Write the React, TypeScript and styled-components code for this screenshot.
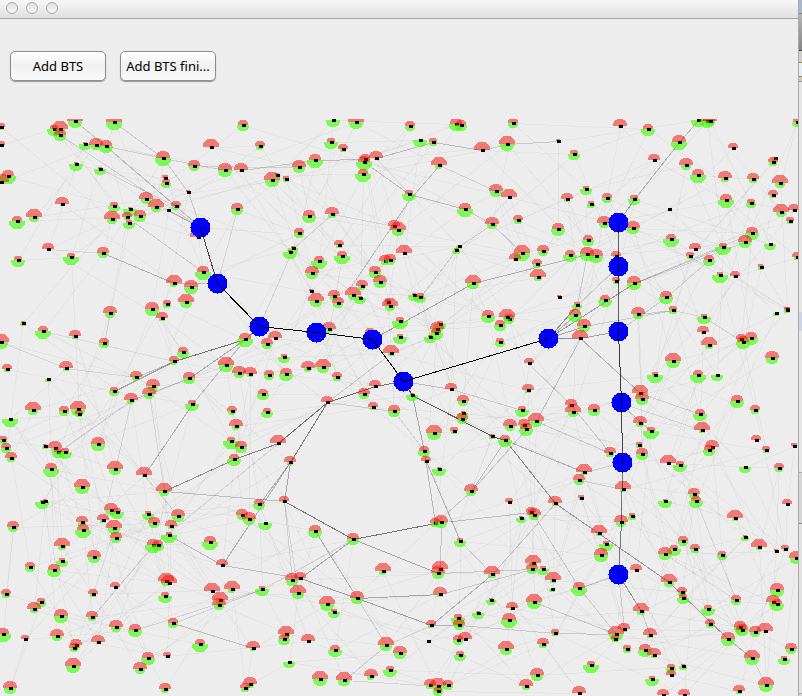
import React from "react";
import styled, { createGlobalStyle } from "styled-components";

const GlobalStyle = createGlobalStyle`
  body { margin: 0; background: #ededed; overflow: hidden; }
`;

const Desktop = styled.div`
  display: flex;
  min-height: 100vh;
  font-family: "Noto Sans", "Liberation Sans", sans-serif;
`;
const Frame = styled.main`
  flex: 1;
  min-width: 0;
  display: flex;
  flex-direction: column;
  background: #ededed;
`;
const TitleBar = styled.header`
  display: flex;
  align-items: center;
  gap: 8px;
  height: 19px;
  padding: 0 6px 2px;
  box-sizing: border-box;
  background: linear-gradient(#f7f7f7, #e0e0e0);
  border-bottom: 1px solid #a3a3a3;
`;
const WindowButton = styled.button`
  width: 12px;
  height: 12px;
  padding: 0;
  border: 1px solid #a9a9a9;
  border-radius: 50%;
  background: linear-gradient(#dedede, #f8f8f8);
`;
const Toolbar = styled.div`
  display: flex;
  gap: 14px;
  padding: 32px 10px 38px;
`;
const ToolButton = styled.button`
  width: 96px;
  height: 30px;
  padding: 0 3px;
  box-sizing: border-box;
  overflow: hidden;
  white-space: nowrap;
  border: 1px solid #8c8c8c;
  border-radius: 5px;
  background: linear-gradient(#ffffff, #f0f0f0 50%, #fafafa);
  box-shadow: 0 1px 1px #9a9a9a;
  color: #000;
  font: 13px/20px "Noto Sans", "Liberation Sans", sans-serif;
`;
const NetworkMap = styled.svg`
  display: block;
  width: 100%;
  height: auto;
`;
const Backdrop = styled.aside`
  flex: none;
  width: 4px;
  box-sizing: border-box;
  border-left: 1px solid #a8a8a8;
  display: flex;
  flex-direction: column;
  background: #d9d9d9;
`;
const Band = styled.div<{ $height: number; $fill: string; $line?: string }>`
  height: ${(p) => p.$height}px;
  box-sizing: border-box;
  background: ${(p) => p.$fill};
  border-bottom: 1px solid ${(p) => p.$line ?? "transparent"};
`;

type Station = [x: number, y: number, up: number, down: number];
type Point = [x: number, y: number];
type Link = [x1: number, y1: number, x2: number, y2: number, weight: number];

const stations: Station[] = [
  [1,127,4,3],[54,129,4,7],[60,129,8,4],[60,135,6,6],[75,121,8,7],[114,122,8,8],[85,144,2,6],[96,145,7,5],[106,146,6,7],[1,145,4,1],
  [243,125,5,6],[211,147,8,2],[260,146,5,4],[163,158,7,8],[76,164,2,7],[100,169,2,6],[194,166,6,5],[225,170,7,7],[241,170,7,2],[8,176,6,8],
  [1,182,8,2],[165,178,3,1],[166,183,4,5],[188,192,2,1],[146,199,7,5],[156,207,8,5],[176,206,5,4],[168,210,1,1],[237,209,6,6],[62,204,7,2],
  [114,206,4,6],[130,209,2,7],[127,217,5,3],[140,216,6,6],[112,219,8,5],[129,223,3,6],[17,221,5,8],[34,217,8,5],[198,237,8,2],[18,260,4,7],
  [48,249,6,1],[71,257,4,8],[103,253,6,5],[203,272,6,8],[174,283,8,4],[191,287,7,7],[186,302,8,6],[167,304,4,4],[152,309,7,7],[110,313,7,5],
  [333,120,1,7],[356,122,8,7],[410,126,5,5],[456,124,6,7],[461,125,5,6],[513,123,5,5],[331,142,4,7],[343,149,5,3],[420,140,1,7],[433,142,4,4],
  [482,150,8,1],[507,144,8,7],[315,160,6,8],[299,167,7,6],[365,159,5,4],[364,162,6,8],[376,158,7,2],[363,174,5,8],[439,165,8,4],[272,180,8,7],
  [277,175,2,3],[286,179,3,3],[409,194,4,7],[496,191,7,6],[509,197,8,1],[465,209,6,8],[518,220,5,4],[492,224,7,5],[309,216,6,7],[332,214,7,4],
  [299,233,5,5],[394,226,6,3],[398,230,8,6],[339,245,5,3],[293,248,2,5],[290,252,2,7],[342,256,5,8],[319,261,5,8],[404,253,8,1],[459,246,1,3],
  [456,250,2,4],[522,253,8,8],[515,259,6,2],[385,261,6,4],[390,260,6,5],[375,272,6,6],[312,273,7,6],[380,282,7,6],[473,283,8,6],[362,286,6,4],
  [311,291,2,1],[334,296,6,4],[316,301,8,6],[353,295,8,5],[360,298,2,6],[338,303,6,5],[414,295,2,6],[420,297,4,6],[388,302,3,3],[390,306,8,5],
  [620,126,7,2],[648,129,5,7],[698,120,1,7],[707,121,8,7],[710,121,7,5],[797,122,4,5],[558,141,2,1],[679,142,7,8],[574,154,4,6],[733,148,5,1],
  [654,160,6,1],[775,158,1,3],[773,162,5,4],[686,165,7,5],[698,175,6,8],[725,178,7,4],[753,179,6,4],[780,183,8,5],[586,189,3,6],[567,199,6,3],
  [607,198,5,5],[634,199,4,6],[591,204,3,4],[773,195,5,3],[726,200,6,8],[751,203,4,5],[669,209,0,0],[781,212,8,5],[794,210,6,2],[790,221,4,3],
  [604,223,7,5],[633,228,7,6],[558,229,6,7],[752,233,6,7],[745,242,7,6],[671,239,5,8],[770,244,1,6],[695,249,6,1],[723,247,4,8],[690,256,4,3],
  [588,240,5,6],[543,251,6,5],[587,254,7,7],[570,255,5,7],[596,256,7,7],[616,256,5,3],[709,260,5,6],[797,257,5,3],[537,264,5,4],[761,267,3,3],
  [538,277,8,4],[720,275,3,8],[735,276,5,2],[616,281,4,3],[634,283,7,7],[559,297,2,1],[666,297,6,7],[605,300,5,7],[577,305,3,5],[787,309,2,1],
  [23,323,2,3],[43,331,5,8],[1,342,8,7],[75,336,6,3],[104,343,5,5],[162,318,6,3],[183,352,5,6],[174,361,5,4],[245,339,6,8],[267,344,6,5],
  [7,369,5,3],[66,368,7,3],[48,379,1,3],[136,377,6,4],[114,391,4,5],[153,386,7,5],[149,394,7,5],[131,400,7,4],[189,378,6,6],[226,365,8,7],
  [239,373,7,5],[250,374,7,3],[269,375,5,5],[192,404,4,7],[263,394,5,6],[33,410,8,5],[64,411,5,5],[78,409,8,7],[79,414,4,3],[10,419,1,8],
  [232,411,5,4],[267,412,4,6],[236,426,7,4],[3,440,4,4],[6,448,5,5],[11,458,6,4],[45,446,2,3],[55,448,7,4],[58,452,4,6],[65,452,4,7],
  [98,444,7,7],[231,441,4,8],[241,447,6,6],[234,459,5,7],[51,469,6,8],[115,469,8,6],[144,475,8,2],[82,487,8,7],[164,491,8,5],[329,329,7,4],
  [275,338,7,1],[400,321,4,8],[400,337,3,7],[391,353,8,3],[370,333,5,5],[440,324,3,6],[437,329,7,5],[436,333,5,7],[430,337,2,6],[488,316,6,7],
  [509,319,5,5],[507,317,8,4],[500,325,5,6],[500,342,4,5],[284,357,3,6],[308,368,7,4],[323,367,8,6],[286,374,6,7],[337,377,5,4],[327,402,6,1],
  [375,386,6,1],[364,394,6,5],[373,407,5,3],[394,411,6,6],[412,395,2,6],[451,389,6,1],[463,401,6,5],[463,413,2,5],[462,419,6,5],[522,410,4,7],
  [529,363,5,1],[528,390,6,3],[278,443,8,1],[290,462,6,3],[434,433,8,7],[454,431,4,3],[510,426,7,5],[524,425,6,4],[526,429,6,7],[492,436,2,3],
  [505,440,5,7],[424,451,5,6],[426,461,5,2],[439,469,2,7],[471,491,7,5],[575,315,6,7],[638,314,7,5],[673,310,4,4],[704,317,3,7],[584,326,7,6],
  [580,338,8,1],[703,332,6,2],[776,313,1,3],[787,310,3,3],[709,345,8,4],[741,339,5,3],[751,338,6,7],[743,342,6,7],[772,358,7,6],[673,361,8,7],
  [655,375,3,8],[698,375,5,8],[717,375,1,6],[640,393,8,4],[642,399,7,6],[571,405,6,3],[573,412,8,5],[594,410,6,6],[536,421,8,6],[737,401,6,7],
  [755,410,5,4],[700,414,5,7],[640,423,7,4],[702,430,8,3],[651,431,4,8],[756,440,5,1],[766,450,4,3],[794,446,3,1],[712,447,7,3],[709,450,5,6],
  [639,445,3,3],[642,454,6,6],[610,453,6,4],[584,472,8,3],[579,480,6,5],[668,463,8,1],[680,465,4,7],[745,467,1,6],[779,468,5,4],[623,489,8,3],
  [694,494,6,5],[581,498,3,2],[42,502,2,7],[45,501,2,1],[13,527,6,5],[82,522,6,4],[83,530,6,8],[62,546,8,4],[103,520,6,3],[111,510,7,5],
  [117,512,4,7],[114,528,8,6],[116,538,6,5],[148,514,3,6],[154,523,6,5],[178,516,7,6],[171,526,6,3],[169,535,3,8],[153,545,6,8],[158,545,5,6],
  [210,542,6,8],[242,515,6,5],[249,519,7,6],[265,523,1,7],[259,504,5,6],[94,557,7,6],[62,561,3,6],[54,570,6,7],[30,567,5,5],[222,565,6,1],
  [115,587,5,1],[6,594,5,4],[41,602,4,5],[34,609,7,4],[93,594,5,3],[166,581,8,5],[169,583,8,2],[165,596,4,7],[212,591,8,1],[232,589,8,4],
  [220,600,8,4],[219,605,7,5],[262,589,3,7],[61,616,7,7],[92,617,6,4],[116,627,7,5],[135,630,6,7],[173,623,5,5],[3,634,6,8],[25,639,4,1],
  [57,636,7,5],[76,645,6,4],[74,648,5,4],[98,642,7,2],[73,666,8,7],[200,644,5,8],[253,648,7,3],[148,658,6,7],[167,656,4,2],[140,669,7,5],
  [10,688,7,6],[165,689,6,4],[250,684,7,4],[245,688,5,4],[284,501,5,2],[315,531,6,7],[353,539,6,6],[435,523,5,4],[441,522,7,6],[460,541,3,6],
  [509,502,4,1],[521,518,2,5],[531,512,5,3],[440,569,8,3],[438,573,7,6],[383,571,8,4],[492,574,8,4],[300,578,6,2],[292,580,7,6],[298,593,8,6],
  [327,604,8,7],[334,612,3,6],[357,598,7,6],[440,594,7,3],[491,600,2,5],[478,613,2,6],[512,608,6,2],[458,618,4,7],[459,625,6,5],[431,625,5,3],
  [509,620,7,8],[286,634,8,4],[284,639,5,6],[308,641,7,1],[335,650,5,7],[386,645,8,6],[400,653,7,6],[428,641,0,0],[458,640,5,5],[465,639,7,2],
  [460,655,4,6],[506,649,8,6],[289,662,1,6],[390,670,4,7],[371,676,7,4],[320,679,8,7],[344,680,8,6],[430,685,6,4],[438,686,8,6],[448,685,5,5],
  [438,691,4,5],[526,686,7,4],[555,503,7,3],[534,515,7,5],[665,501,2,7],[696,501,5,7],[787,504,5,1],[735,518,8,3],[621,522,7,5],[632,516,3,4],
  [599,533,8,3],[606,544,3,7],[601,555,7,7],[683,541,5,5],[674,549,4,7],[665,554,7,6],[695,549,5,4],[745,537,2,4],[759,547,8,3],[776,551,2,2],
  [785,549,4,2],[722,555,4,5],[796,558,7,6],[533,563,8,4],[532,569,6,5],[543,569,3,6],[553,580,8,3],[579,588,6,8],[552,589,1,3],[636,570,6,1],
  [669,582,8,5],[682,592,5,4],[683,598,4,6],[777,590,7,7],[736,600,5,5],[773,602,7,4],[777,604,5,7],[534,602,8,7],[641,611,8,4],[708,609,4,7],
  [710,624,5,4],[740,627,6,6],[742,630,6,6],[755,632,6,5],[765,631,8,2],[728,639,7,7],[624,629,6,3],[616,634,8,7],[615,639,4,3],[650,635,7,3],
  [555,633,4,3],[543,644,6,4],[627,649,4,4],[645,650,6,7],[654,655,7,3],[791,649,6,5],[784,659,3,6],[752,658,8,7],[591,665,4,8],[671,668,4,5],
  [671,675,5,1],[683,666,2,4],[652,679,3,7],[537,675,7,6],[766,685,8,7],[739,691,6,3],[579,693,7,1],[663,695,6,1],[684,695,6,1],
];

const hubs: Point[] = [
  [200,227],[217,283],[259,326],[316,332],[372,339],[403,381],[548,338],
  [618,222],[618,266],[618,331],[621,402],[622,462],[618,574],
];

const trunks: Link[] = [
  [200,227,217,283,0.7],[217,283,259,326,1],[259,326,316,332,1],[316,332,372,339,1],[372,339,403,381,1],[403,381,548,338,1],
  [618,222,618,266,0.6],[618,266,618,331,0.6],[618,331,621,402,0.75],[621,402,622,462,0.7],[622,462,621,522,0.5],[621,522,618,574,0.5],
];

const links: Link[] = [
  [403,381,412,395,0.7],[412,395,492,436,0.6],[492,436,505,440,0.6],[505,440,555,503,0.4],[555,503,669,582,0.35],[669,582,728,639,0.3],
  [728,639,752,658,0.25],[752,658,766,685,0.12],[403,381,375,386,0.5],[375,386,327,402,0.55],[327,402,278,443,0.5],[278,443,234,459,0.45],
  [234,459,164,491,0.4],[327,402,290,462,0.45],[290,462,284,501,0.3],[290,462,259,504,0.25],[284,501,353,539,0.5],[353,539,435,523,0.5],
  [259,326,245,339,0.4],[245,339,174,361,0.5],[174,361,114,391,0.3],[174,361,136,377,0.2],[245,339,189,378,0.25],[189,378,131,400,0.2],
  [245,339,192,404,0.2],[192,404,144,475,0.25],[353,539,438,573,0.3],[353,539,300,578,0.25],[315,531,357,598,0.25],[357,598,440,594,0.3],
  [300,578,357,598,0.3],[357,598,431,625,0.3],[60,135,200,227,0.12],[75,121,106,146,0.15],[106,146,200,227,0.2],[114,122,163,158,0.15],
  [163,158,188,192,0.15],[188,192,200,227,0.15],[100,169,176,206,0.12],[168,210,200,227,0.2],[146,199,200,227,0.12],[103,253,174,283,0.25],
  [174,283,217,283,0.2],[127,217,203,272,0.15],[48,249,103,253,0.1],[106,146,163,158,0.12],[163,158,225,170,0.12],[194,166,299,167,0.1],
  [241,170,315,160,0.15],[315,160,365,159,0.2],[376,158,433,142,0.2],[433,142,482,150,0.2],[482,150,507,144,0.15],[507,144,558,141,0.12],
  [364,162,409,194,0.2],[409,194,465,209,0.2],[465,209,492,224,0.15],[492,224,522,253,0.15],[439,165,409,200,0.2],[409,200,349,289,0.2],
  [439,165,496,191,0.12],[332,214,394,226,0.1],[332,214,293,248,0.12],[473,283,587,254,0.25],[372,339,473,283,0.3],[420,297,459,246,0.15],
  [459,246,492,224,0.15],[618,222,634,199,0.35],[634,199,679,142,0.25],[679,142,698,120,0.2],[548,338,634,283,0.35],[634,283,723,247,0.15],
  [634,283,745,242,0.12],[634,283,752,233,0.12],[577,305,587,254,0.15],[577,305,618,266,0.15],[548,338,577,305,0.4],[548,338,575,315,0.25],
  [548,338,584,326,0.3],[548,338,580,338,0.4],[580,338,618,331,0.3],[584,326,673,310,0.15],[618,331,666,297,0.15],[666,297,709,260,0.12],
  [638,314,673,310,0.12],[673,310,704,317,0.1],[704,317,743,342,0.12],[580,338,640,393,0.25],[580,338,536,421,0.2],[528,363,571,405,0.12],
  [571,405,610,453,0.15],[536,421,610,453,0.15],[505,440,584,472,0.25],[505,440,471,491,0.2],[526,429,471,491,0.15],[403,381,451,389,0.2],
  [451,389,522,410,0.15],[412,395,424,451,0.3],[424,451,435,523,0.2],[426,461,460,541,0.25],[327,402,394,411,0.15],[394,411,424,451,0.12],
  [327,402,391,353,0.15],[391,353,430,337,0.1],[441,522,440,569,0.15],[435,523,531,512,0.2],[555,503,492,574,0.15],[492,574,431,625,0.25],
  [431,625,459,625,0.25],[459,625,555,633,0.15],[555,633,616,634,0.15],[438,573,532,569,0.15],[440,594,532,569,0.15],[460,541,492,574,0.12],
  [164,491,284,501,0.2],[290,462,222,565,0.25],[169,535,222,565,0.2],[222,565,300,578,0.2],[153,545,92,617,0.15],[278,443,153,545,0.12],
  [173,623,253,648,0.2],[135,630,262,589,0.12],[173,623,262,589,0.12],[262,589,353,539,0.12],[131,400,115,469,0.12],[131,400,58,452,0.12],
  [149,394,164,491,0.1],[144,475,178,516,0.12],[43,331,174,361,0.08],[110,313,104,343,0.1],[1,342,66,368,0.1],[66,368,136,377,0.1],
  [618,574,641,611,0.35],[641,611,650,635,0.15],[618,574,579,588,0.15],[618,574,624,629,0.15],[579,588,534,515,0.15],[579,588,616,634,0.15],
  [534,602,616,634,0.15],[696,501,736,600,0.1],[665,554,736,600,0.08],[579,480,623,489,0.12],[584,472,622,462,0.12],[357,598,386,645,0.12],
  [386,645,431,625,0.1],[344,680,386,645,0.15],[344,680,438,686,0.1],[618,402,702,430,0.1],[618,402,651,431,0.2],[640,393,700,414,0.12],
  [284,501,292,580,0.12],[284,501,298,593,0.1],[471,491,435,523,0.15],[200,227,282,233,0.05],[237,209,217,283,0.1],[293,248,259,326,0.12],
];

// Faint mesh: every station reaches a few of its more distant neighbours.
const faintMesh: Link[] = stations.flatMap(([x, y], i) =>
  stations.flatMap(([u, v], j): Link[] => {
    const distance = Math.hypot(u - x, v - y);
    const inGap = Math.hypot(((x + u) / 2 - 360) / 68, ((y + v) / 2 - 480) / 72) < 1;
    const chosen = (i * 37 + j * 61) % 17 === 0;
    return j > i && chosen && !inGap && distance > 35 && distance < 150
      ? [[x, y, u, v, 0.035]]
      : [];
  })
);

const LinkLines = ({ items }: { items: Link[] }) => (
  <g stroke="#000" strokeWidth={1}>
    {items.map(([x1, y1, x2, y2, weight], i) => (
      <line key={i} x1={x1 + 0.5} y1={y1 + 0.5} x2={x2 + 0.5} y2={y2 + 0.5} strokeOpacity={weight} />
    ))}
  </g>
);

const sector = (x: number, y: number, size: number, sweep: 0 | 1) => {
  const r = size + 0.4;
  return `M${x - r} ${y}A${r} ${r} 0 0 ${sweep} ${x + r} ${y}Z`;
};

const StationMark = ({ at: [x, y, up, down] }: { at: Station }) => (
  <g>
    {down > 0 && <path d={sector(x, y, down, 0)} fill="rgb(60,255,0)" fillOpacity={0.62} />}
    {up > 0 && <path d={sector(x, y, up, 1)} fill="rgb(245,8,0)" fillOpacity={0.5} />}
    <rect x={x - 1} y={y - 1} width={4} height={3} />
  </g>
);

export default function App() {
  return (
    <>
      <GlobalStyle />
      <Desktop>
        <Frame>
          <TitleBar>
            <WindowButton aria-label="Close" />
            <WindowButton aria-label="Minimize" />
            <WindowButton aria-label="Zoom" />
          </TitleBar>
          <Toolbar>
            <ToolButton>Add BTS</ToolButton>
            <ToolButton>Add BTS fini...</ToolButton>
          </Toolbar>
          <NetworkMap viewBox="0 119 798 577" shapeRendering="crispEdges" role="img" aria-label="BTS network">
            <LinkLines items={faintMesh} />
            <LinkLines items={links} />
            {stations.map((station, i) => <StationMark key={i} at={station} />)}
            {hubs.map(([x, y], i) => <circle key={i} cx={x + 0.5} cy={y + 0.5} r={10} fill="#00f" />)}
            <LinkLines items={trunks} />
          </NetworkMap>
        </Frame>
        <Backdrop>
          <Band $height={14} $fill="#a9b8c9" $line="#8d7958" />
          <Band $height={37} $fill="linear-gradient(#b5b5b5, #858585)" $line="#444" />
          <Band $height={12} $fill="#cfcfcf" $line="#b08b1a" />
          <Band $height={14} $fill="#e5edf7" $line="#b08b1a" />
          <Band $height={5} $fill="#c9c9c9" $line="#999" />
          <Band $height={230} $fill="#e6e6e6" />
          <Band $height={19} $fill="#cbd5e6" />
          <Band $height={142} $fill="#e6e6e6" $line="#aaa" />
          <Band $height={51} $fill="#d5d5d5" $line="#888" />
          <Band $height={170} $fill="#e2e2e2" $line="#aaa" />
        </Backdrop>
      </Desktop>
    </>
  );
}
